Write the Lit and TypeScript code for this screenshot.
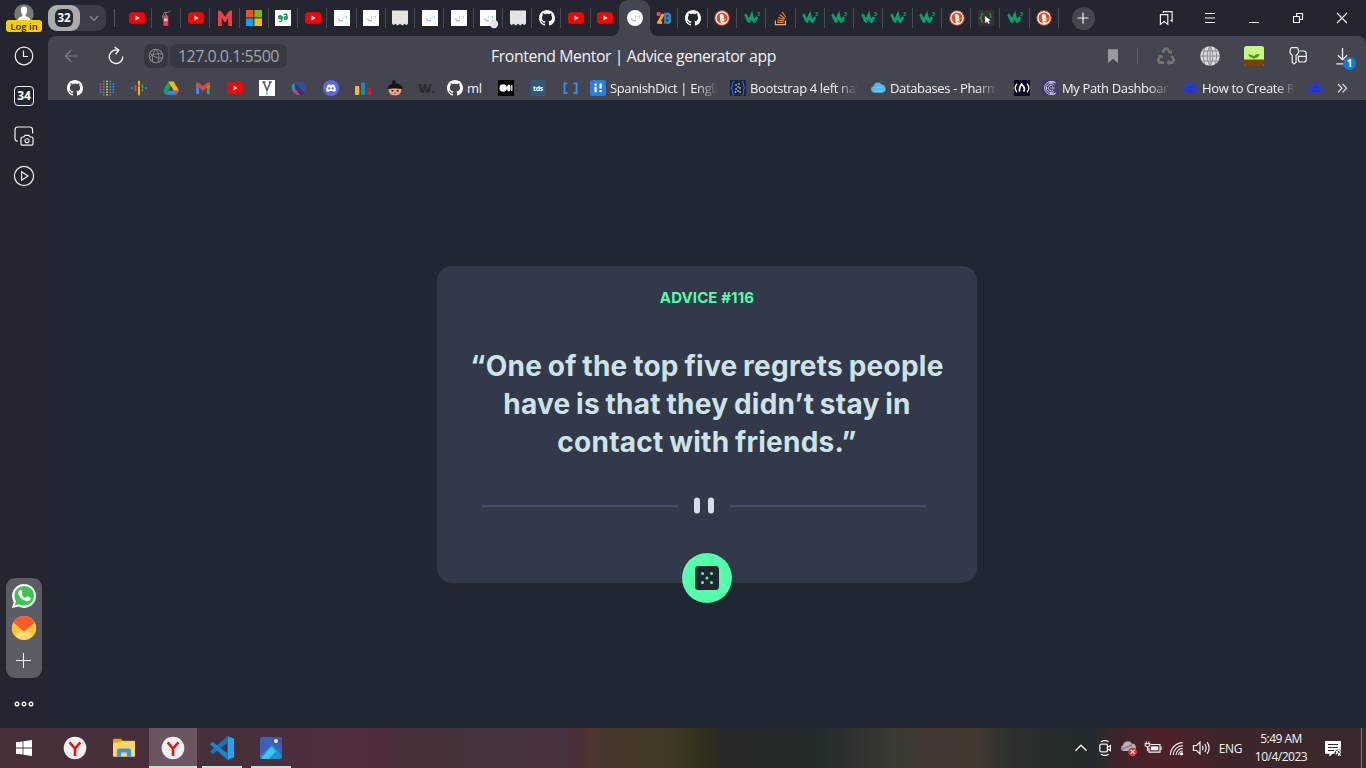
import { LitElement, html, svg, css, nothing } from "lit";
import { customElement, property } from "lit/decorators.js";
import { classMap } from "lit/directives/class-map.js";

const GITHUB =
  "M8 0C3.58 0 0 3.58 0 8c0 3.54 2.29 6.53 5.47 7.59.4.07.55-.17.55-.38 0-.19-.01-.82-.01-1.49-2.01.37-2.53-.49-2.69-.94-.09-.23-.48-.94-.82-1.13-.28-.15-.68-.52-.01-.53.63-.01 1.08.58 1.23.82.72 1.21 1.87.87 2.33.66.07-.52.28-.87.51-1.07-1.78-.2-3.64-.89-3.64-3.95 0-.87.31-1.59.82-2.15-.08-.2-.36-1.02.08-2.12 0 0 .67-.21 2.2.82.64-.18 1.32-.27 2-.27s1.36.09 2 .27c1.53-1.04 2.2-.82 2.2-.82.44 1.1.16 1.92.08 2.12.51.56.82 1.27.82 2.15 0 3.07-1.87 3.75-3.65 3.95.29.25.54.73.54 1.48 0 1.07-.01 1.93-.01 2.2 0 .21.15.46.55.38A8.01 8.01 0 0 0 16 8c0-4.42-3.58-8-8-8z";

const swirl = svg`<path d="M4.200 8.400Q5.400 11.500 9 10.700" stroke="#a7afdc" stroke-width="1.200"/><path d="M8.600 5.200V9" stroke="#b9e3e8" stroke-width=".9"/><path d="M10.300 6.900h.9M12.600 5.700v2.600M11.600 6.900h1" stroke="#8fd3da" stroke-width=".9"/>`;
const cloud = (a: string, b: string) => svg`<path d="M3.800 13.400A3.400 3.400 0 0 1 3 6.800 4.600 4.600 0 0 1 11.300 5a4.400 4.400 0 0 1 1.300 8.400z" transform="translate(.4 -.6)" fill="${a}"/><path d="M5 11.200h7M6.500 7.400h5" stroke="${b}" stroke-width="1"/>`;

/* glyph table: [viewBox size, drawing] */
const glyphs: Record<string, [number, unknown]> = {
  youtube: [16, svg`<rect y="2.3" width="16" height="11.4" rx="3" fill="#f00"/><path d="M6.5 5.6 10.6 8 6.5 10.4z" fill="#fff"/>`],
  extinguisher: [16, svg`<rect x="5.300" y="5" width="5" height="11" rx="1.600" fill="#e2434f"/><path d="M7.800 5V2.500M6 2.400h4.500M10.500 2l2-.8M6 3Q4.600 5 4.600 8.500" stroke="#7d7f87" stroke-width="1"/><rect x="6" y="8.500" width="3.600" height="2.600" fill="#f0b9bd"/>`],
  bigM: [16, svg`<path d="M1 16V1.500Q1 .2 2.200.4 4.600.8 8 7 11.400.8 13.800.4 15 .2 15 1.500V16H11.200V8L8 12.800 4.800 8V16z" fill="#ef3f45"/>`],
  microsoft: [16, svg`<path d="M0 0h7.400v7.400H0z" fill="#f25022"/><path d="M8.400 0H16v7.400H8.400z" fill="#7fba00"/><path d="M0 8.400h7.400V16H0z" fill="#00a4ef"/><path d="M8.400 8.400H16V16H8.400z" fill="#ffb900"/>`],
  ga: [16, svg`<path d="M0 0h16v16H0z" fill="#fff"/><path d="M6.900 6v3.600Q6.900 11.800 4.200 11.600" stroke="#10995b" stroke-width="1.400"/><circle cx="5.200" cy="7.300" r="1.300" stroke="#10995b" stroke-width="1.800"/><path d="M8.600 4.700Q12 3 12 6v3.600" stroke="#10995b" stroke-width="1.500"/><circle cx="10.300" cy="8" r="1.200" stroke="#10995b" stroke-width="1.500"/>`],
  mentor: [16, svg`<path d="M0 0h16v16H0z" fill="#fff"/>${swirl}`],
  mentorDot: [16, svg`<path d="M0 0h16v16H0z" fill="#fff"/>${swirl}<circle cx="14" cy="14" r="4.200" fill="#e4e5ea"/>`],
  mentorRound: [16, svg`<circle cx="8" cy="8" r="8" fill="#fff"/>${swirl}`],
  receipt: [16, svg`<path d="M0 .5h16V13.500l-1.600 1.800-1.800-1.500-2.300 1.700-2.300-1.700-2.300 1.700-2.300-1.700-1.800 1.500L0 13.500z" fill="#e4e4e4"/><path d="M2 3h3M7 6h3M4 9h2M10 3h2" stroke="#dcdcdc"/>`],
  github: [16, svg`<path d="${GITHUB}" fill="#fff"/>`],
  bee: [16, svg`<path d="M2.400 13 7.200 4" stroke="#f9ab17" stroke-width="2.800"/><path d="M1.200 12.600h5" stroke="#f9ab17" stroke-width="2.400"/><circle cx="2.600" cy="4" r="2.200" fill="#ef4b3c"/><path d="M9.400 4v8.600h2.800a2.400 2.400 0 0 0 0-4.600H11h1a2 2 0 0 0 0-4z" stroke="#3c7df0" stroke-width="2.400"/><path d="M12.600 8.400a2.200 2.200 0 0 1-.4 4.200" stroke="#32a852" stroke-width="2.600"/>`],
  duck: [16, svg`<circle cx="8" cy="8" r="7.700" fill="#e0492b"/><circle cx="8" cy="8" r="6.100" stroke="#fff" stroke-width="1.200"/><path d="M5.700 5Q7.600 2.800 9.600 5.300l.4 3 .8 4.600Q9 14.300 6.800 13.200z" fill="#fff"/><path d="M8.400 8h3.600l-1.200 1.400H8.400z" fill="#fbb000"/><path d="m7.600 11.400 3-.6-.2 2.300z" fill="#5bb04a"/>`],
  w3: [16, svg`<path d="M.8 4.600Q2.400 5.200 3.200 8.200 3.900 10.700 5 11.300L7.700 5.300Q8.600 9.800 10.400 11.300L13.200 7" stroke="#0a9f6a" stroke-width="2.900"/><text x="12.900" y="5.600" font-size="5.600" font-weight="700" fill="#0a9f6a">3</text>`],
  stack: [16, svg`<path d="M2.400 10.400v4.200h10V10.400" stroke="#bcbbbb" stroke-width="1.200"/><path d="M4.200 12.400h6.400M4.400 10.100l6.400.6M5.200 7.500l6 1.800M6.800 4.800l5 3.600M9.200 2l3.400 5" stroke="#f48024" stroke-width="1.200"/>`],
  codeCursor: [16, svg`<rect width="16" height="16" rx="2" fill="#33332f"/><path d="M5 3.600Q3.400 3.400 3.600 5.400T2.200 8q1.600.3 1.400 2.400T5 12.200M11 3.600q1.600-.2 1.400 1.800T13.800 8" stroke="#2f9c52" stroke-width="1.200"/><path d="m6.800 6 .4 7.200 1.700-1.700 1.600 2.400 1.300-.8-1.500-2.400 2.300-.4z" fill="#fff"/>`],
  dots: [16, svg`${[1.6, 4.8, 8, 11.2, 14.4].map((x, i) => [0, 1, 2, 3, 4, 5].map((y) => (i % 4 === 0 && (y === 0 || y === 5)) ? nothing : svg`<circle cx="${x}" cy="${1.4 + y * 2.7}" r=".95" fill="${y < 3 ? ["#ea4335", "#4285f4", "#fbbc04", "#4285f4", "#4285f4"][i] : ["#4285f4", "#34a853", "#fbbc04", "#4285f4", "#34a853"][i]}"/>`))}`],
  podcasts: [16, svg`<g stroke-width="1.900" stroke-linecap="round"><path d="M1.200 8v.2" stroke="#3c82f0"/><path d="M4.600 6v4.600" stroke="#ea4335"/><path d="M8 1.400v3.400" stroke="#fbbc04"/><path d="M8 7v7.600" stroke="#fbbc04"/><path d="M11.400 5.200v2.400M11.400 10v.6" stroke="#34a853"/><path d="M14.800 8v.2" stroke="#4285f4"/></g>`],
  drive: [16, svg`<path d="M5.400 1.500 0 10.800l2.700 4L8 5.700z" fill="#10a65a"/><path d="M5.400 1.500h5.200L16 10.800h-5.200z" fill="#ffba00"/><path d="M5.300 10.800H16l-2.700 4H2.700z" fill="#3f7df0"/><path d="M13 10.800h3l-2.700 4z" fill="#ea4335"/>`],
  gmail: [16, svg`<path d="M1.200 3.600h2.900V14H2.200a1 1 0 0 1-1-1z" fill="#4285f4"/><path d="M11.900 3.600h2.900V13a1 1 0 0 1-1 1h-1.900z" fill="#34a853"/><path d="m11.900 3.200 2.900-.3v3.400l-2.900 2.300z" fill="#fbbc04"/><path d="M1.200 3q1.500-1 2.900 0L8 6.200 11.900 3q1.600-1 2.900 0v2.400L8 10.800 1.200 5.400z" fill="#ea4335"/>`],
  vee: [16, svg`<path d="M0 0h16v16H0z" fill="#fff"/><path d="M4.600 2 8 10.300 11.400 2M3.400 2h3M9.800 2h3" stroke="#555" stroke-width="1.500"/><path d="M8 11v4" stroke="#7cc5e8" stroke-width="1.600"/>`],
  sphere: [16, svg`<circle cx="8" cy="8" r="7.400" fill="#3a3278"/><path d="M3.400 2.200A7.400 7.400 0 0 0 2.400 12.800L4 9z" fill="#1f9da8"/><path d="M3.400 2.200 13.600 12.800A7.400 7.400 0 0 0 11 1.300Q7 0 3.400 2.200z" fill="#34508f"/><path d="m3.600 8 5.600 7.300Q5 15.600 2.400 12.800z" fill="#b8477d"/>`],
  discord: [16, svg`<circle cx="8" cy="8" r="8" fill="#5865f2"/><path d="M3.200 11Q3 7.400 4.800 4.800l2-.6.5.7h1.400l.5-.7 2 .6Q13 7.400 12.800 11l-2.100 1.100-.7-1.200H6l-.7 1.200z" fill="#fff"/><circle cx="6.300" cy="8.400" r="1.100" fill="#5865f2"/><circle cx="9.700" cy="8.400" r="1.100" fill="#5865f2"/>`],
  bars: [16, svg`<rect x="0" y="6" width="4.300" height="9" rx="1" fill="#f2b934"/><rect x="6" y="2.400" width="4.300" height="12.600" rx="1" fill="#1d87bd"/><rect x="12" y="7.600" width="4.200" height="7.400" rx="1" fill="#bf2432"/>`],
  head: [16, svg`<circle cx="7" cy="2" r="1.800" fill="#111"/><path d="M.4 9Q1 3.400 8 3.400T15.600 9z" fill="#16120f"/><path d="M1.600 8.600h12.800q.6 6.600-6.400 7Q1 15.200 1.600 8.600z" fill="#eaa387"/><path d="M1 8.800Q5 9 7 6.400 10 9 15 8.800V6H1z" fill="#16120f"/><circle cx="5.400" cy="10.800" r="1" fill="#34201c"/><circle cx="10.600" cy="10.800" r="1" fill="#34201c"/><path d="M6.800 13.400h2.400" stroke="#c84d4d"/>`],
  wDot: [16, svg`<text x="-.8" y="12.600" font-size="13" font-weight="800" fill="#2b2b30">W.</text>`],
  medium: [16, svg`<path d="M0 0h16v16H0z" fill="#000"/><circle cx="5.200" cy="8" r="3.800" fill="#fff"/><ellipse cx="10.800" cy="8" rx="1.700" ry="3.500" fill="#fff"/><path d="M13.800 5v6" stroke="#fff" stroke-width="1.200"/>`],
  tds: [16, svg`<path d="M0 0h16v16H0z" fill="#355876"/><text x="8" y="10.800" font-size="7" font-weight="700" text-anchor="middle" fill="#fff">tds</text>`],
  brackets: [16, svg`<path d="M5.400 3.400H2.400v9.600h3M11.600 3.400h3v9.600h-3" stroke="#3b8fe8" stroke-width="1.800"/>`],
  spanish: [16, svg`<rect width="16" height="16" rx="2.600" fill="#2680e0"/><path d="M5.600 6.800v5.400M10.600 3.400v5.200" stroke="#fff" stroke-width="2.300"/><path d="M5.600 3.400v2.200M10.600 10v2.200" stroke="#fff" stroke-width="2.300"/>`],
  snippet: [16, svg`<path d="M0 0h16v16H0z" fill="#1c2533"/><path d="M4.400 1.400Q2.400 1.400 2.600 4T1 8q1.800.6 1.600 4t1.800 2.600M11.600 1.400q2 0 1.800 2.600T15 8q-1.800.6-1.600 4t-1.800 2.600" stroke="#2857e4" stroke-width="1.300"/><path d="M6 5h.1M9 4h.1M8 7h.1M10 8h.1M6 9h.1M8 11h.1M10 12h.1M5.500 12h.1" stroke="#dfe6f4" stroke-width="1.600" stroke-linecap="round"/>`],
  cloudLight: [16, cloud("#56b7ea", "#8fd2f4")],
  cloudBlue: [16, cloud("#2c37cc", "#2630b4")],
  fcc: [16, svg`<path d="M0 0h16v16H0z" fill="#0a0a23"/><path d="M3 3.600Q-.6 8 3 12.400M13 3.600q3.600 4.400 0 8.800" stroke="#fff" stroke-width="1.300"/><path d="M5.800 11.600Q4.400 9 7.600 4q3 3 2.800 5.400l-.6 2.200" stroke="#fff" stroke-width="1.700"/>`],
  coil: [16, svg`<path d="M0 0h16v16H0z" fill="#44386e"/><path d="M13.800 3.200a6.600 6.600 0 1 0 0 9.600M12.400 5a4.600 4.600 0 1 0 0 6M11.200 6.600a2.700 2.700 0 1 0 0 3M7 2.200h6M8 13.800h5.600M8 8h4.800" stroke="#cfc9e6" stroke-width="1"/>`],

  chevDown: [16, svg`<path d="m4 6 4 4.400L12 6" stroke="#8f9097" stroke-width="1.200"/>`],
  plus: [16, svg`<path d="M8 2.600v10.800M2.600 8h10.800" stroke="#f2f2f4" stroke-width="1.200"/>`],
  plusLight: [15, svg`<path d="M7.500 0v15M0 7.500h15" stroke="#f0f0f2" stroke-width="1"/>`],
  collections: [16, svg`<path d="M5.300 3V1.600h8.800v9.800l-1.700-1.300" stroke="#f0f0f2" stroke-width="1.200"/><path d="M2.400 4.600h7.400v9.800L6.100 11.600l-3.700 2.800z" stroke="#f0f0f2" stroke-width="1.200"/>`],
  menu: [16, svg`<path d="M3 3.500h10M3 8h10M3 12.500h10" stroke="#f5f5f6" stroke-width="1.100"/>`],
  minimize: [16, svg`<path d="M3 12.500h10" stroke="#f5f5f6"/>`],
  restore: [16, svg`<path d="M3.500 6.500h6v6h-6zM6.600 6.400V3.500h5.900v6H9.800" stroke="#f5f5f6" stroke-width="1.100"/>`],
  close: [16, svg`<path d="m3 3 10 10M13 3 3 13" stroke="#f5f5f6" stroke-width="1.100"/>`],
  back: [16, svg`<path d="M15 8H1.600M7.400 2 1.400 8l6 6" stroke="#7d7d86" stroke-width="1.200"/>`],
  reload: [20, svg`<path d="M16.800 10.600A6.800 6.800 0 1 1 12.400 4.400" stroke="#efeff1" stroke-width="1.400"/><path d="m8.600 1 4.200 3.200-3.200 4" stroke="#efeff1" stroke-width="1.400"/>`],
  globeThin: [16, svg`<circle cx="8" cy="8" r="6.800" stroke="#85868e" stroke-width="1.100"/><path d="M1.300 9.200Q8 4 14.400 6.200M4.600 13.600Q3.600 6 7.600 1.400M10 14.400Q12.600 7.200 8 1.400M1.900 5.200q5 5.400 12.400 5" stroke="#85868e" stroke-width="1"/>`],
  bookmark: [16, svg`<path d="M3 1.200h10V15L8 10.800 3 15z" fill="#9a9aa1"/>`],
  recycle: [20, svg`<g stroke="#74746f" stroke-width="2.600"><path d="M6.500 6.500 9 2.800h2.600l2.200 3.600"/><path d="m15.600 9.600 2.200 4.200-1.400 2.800h-4.200"/><path d="M8 16.600H3.400L2.200 14l2.200-3.800"/></g><path d="m11.800 6.400 4 1.600.4-4zM13.400 13.400v6l-3-3zM1.600 9.600l4.400-.8 1.400 4z" fill="#74746f"/>`],
  globe: [20, svg`<circle cx="10" cy="10" r="9.800" fill="#d9d9da"/><path d="M10 0v20M2.400 5h15.200M0 10h20M2.400 15h15.200M4.600 2Q1.800 10 4.600 18M15.400 2q2.800 8 0 16M10 .2Q4 10 10 19.800M10 .2q6 9.800 0 19.600" stroke="#86868b" stroke-width=".9"/>`],
  plant: [20, svg`<rect width="20" height="20" rx="2.600" fill="#c9f583"/><path d="M0 13.400h20v4a2.600 2.600 0 0 1-2.600 2.600H2.600A2.600 2.600 0 0 1 0 17.400z" fill="#7b3f08"/><path d="M10 13.600v-3.200M10 11.400Q6.600 12 5 9q3-.4 5 2.400 1.400-2.800 4.800-2.800-1 3-4.800 2.800" fill="#459a10" stroke="#459a10" stroke-width="1.100"/>`],
  keys: [20, svg`<path d="M4.200 9.200Q1.600 7.600 2 4.800L2.600 2.600Q2.900 1.700 4 1.700H8.600q1.100 0 1.400.9l.6 2.200q.4 2.800-2.500 4.400v7l-2 1.700-1.900-1.700z" stroke="#f0f0f2" stroke-width="1.200"/><path d="M11.400 5h4.200q2.600 0 2.600 2.600v5.800q0 2.600-2.600 2.600h-3q-2.200 0-2.200-2.200V9.600M10.600 10.300h7.400" stroke="#f0f0f2" stroke-width="1.200"/>`],
  download: [20, svg`<path d="M10.500 2v11.400M5.900 9.200l4.600 4.500 4.600-4.500M4.300 17.800h9" stroke="#f0f0f2" stroke-width="1.300"/>`],
  more: [16, svg`<path d="m4 4 4 4.200L4 12.400M8.600 4l4 4.200-4 4.200" stroke="#e6e6ea" stroke-width="1.200"/>`],

  avatar: [20, svg`<circle cx="10" cy="10" r="9.800" fill="#77787c"/><path d="M10 2.400q3.400 0 3.200 3.600-.2 3.400-1.600 4.800v1.400q4 1 4.600 3.400v2.600L10 20l-6.200-1.800v-2.600q.6-2.400 4.600-3.400v-1.400Q7 9.400 6.800 6 6.600 2.400 10 2.400z" fill="#fff"/>`],
  clock: [20, svg`<circle cx="10" cy="10" r="8.800" stroke="#f0f0f2" stroke-width="1.200"/><path d="M9.500 4.500V10.500H14" stroke="#f0f0f2" stroke-width="1.200"/>`],
  camera: [22, svg`<path d="M4.600 16.400Q2 16 2 13.600V5q0-3 3-3h11.600q3 0 3 3v3.600" stroke="#f0f0f2" stroke-width="1.200"/><path d="M8 13.400q0-1.400 1.400-1.400h1.400l1.200-1.600h4l1.200 1.600h1.400q1.400 0 1.400 1.400v5.200q0 1.600-1.400 1.600H9.400Q8 20.200 8 18.600z" stroke="#f0f0f2" stroke-width="1.200"/><circle cx="14" cy="15.800" r="2" stroke="#f0f0f2" stroke-width="1.100"/>`],
  play: [22, svg`<circle cx="11" cy="11" r="9.600" stroke="#f0f0f2" stroke-width="1.200"/><path d="M8.600 6.800 15 11l-6.400 4.200z" stroke="#f0f0f2" stroke-width="1.200"/>`],
  whatsapp: [24, svg`<path d="M0 24 1.700 18A12 12 0 1 1 6.400 22.500z" fill="#fff"/><circle cx="12.200" cy="11.800" r="9.900" fill="#3fc351"/><path d="m2.600 21.600 1.500-5.200 3.600 3.800z" fill="#3fc351"/><path d="M7.800 5.900q1-.6 1.700.4l1 2.300q.2.700-.9 1.900 1.500 2.600 4 3.600l1.400-1.500q.4-.4 1-.1l2.300 1.200q.6.400.1 1.700-1.100 2.100-3.800 1.700-6-1.600-8.300-7.200-.5-2.600 1.500-4z" fill="#fff"/>`],
  mail: [24, svg`<circle cx="12" cy="12" r="12" fill="#ffda77"/><path d="M1.400 6.400 10 13.600 3 20A12 12 0 0 1 1.400 6.400zM22.600 6.400 14 13.600l7 6.400a12 12 0 0 0 1.600-13.600z" fill="#ffc530"/><path d="M1.400 6.500Q4.600 0 12 0t10.600 6.500L12 15.600z" fill="#fa5a2c"/>`],
  ellipsis: [22, svg`<g stroke="#f0f0f2" stroke-width="1.400"><circle cx="4" cy="11" r="1.800"/><circle cx="11" cy="11" r="1.800"/><circle cx="18" cy="11" r="1.800"/></g>`],

  windows: [16, svg`<path d="M0 2.300 6.600 1.400v6.100H0zM7.400 1.300 16 0v7.500H7.400zM0 8.400h6.600v6.200L0 13.700zM7.400 8.400H16V16l-8.600-1.300z" fill="#fff"/>`],
  yandex: [22, svg`<circle cx="11" cy="11" r="11.300" fill="#f1f1f1"/><path d="M5.600 5.400 11 11.600l5.400-6.200M11 11v8" stroke="#e0161c" stroke-width="2.600"/>`],
  folder: [22, svg`<path d="M0 3q0-1.200 1.200-1.200h6.600l1.800 2H22V9H0z" fill="#e5a50d"/><path d="M0 6.400 9.600 4.200H22V19q0 .8-.8.8H.8Q0 19.800 0 19z" fill="#ffd766"/><path d="M4 19.800v-6.400q0-2 2-2h10q2 0 2 2v6.400h-4.200V15.600H8.200v4.200z" fill="#3a95dd"/>`],
  vscode: [24, svg`<path d="M17.600 0 24 2.800v18.400L17.600 24z" fill="#25a3f1"/><path d="M0 15.600 17.600 0v6.800L2.400 18.400z" fill="#0f74b8"/><path d="M0 8.200 2.400 5.800 17.600 17.200V24z" fill="#1485cf"/>`],
  photos: [22, svg`<rect width="22" height="22" rx="2.400" fill="#3c60ba"/><path d="M12 0h7.600Q22 0 22 2.400V10z" fill="#51509f"/><path d="M0 20 9.400 9.400q2-2 4 0L22 18v1.600Q22 22 19.600 22H2.400Q0 22 0 20z" fill="#1c8dd8"/><path d="M1 21.400 10.400 10.600q1-1 2 0L16 14.600 8.600 22H2.400z" fill="#3cc6ee"/><circle cx="16" cy="4" r="1.900" fill="#f5f7fc"/>`],
  chevUp: [16, svg`<path d="m2.400 10.800 5.600-5.600 5.600 5.600" stroke="#f3f3f3" stroke-width="1.300"/>`],
  meet: [16, svg`<rect x="2.800" y="4.200" width="7.600" height="7.600" rx="1.600" stroke="#f3f3f3" stroke-width="1.300"/><path d="m10.600 7.200 2.800-1.600v5l-2.800-1.600M4 1.800Q8 -.4 11.600 1.800M4 14.200q4 2.200 7.600 0" stroke="#f3f3f3" stroke-width="1.200"/>`],
  drop: [18, svg`<path d="M3 12A3 3 0 0 1 3 6.400 4.800 4.800 0 0 1 11.800 4.600 4 4 0 0 1 14 12z" fill="#b7b3b4"/><path d="M1.600 10.200 12.400 5.800" stroke="#8c8788" stroke-width="1.800"/><circle cx="12.600" cy="12.800" r="4.400" fill="#e2323e"/><path d="m10.700 10.900 3.800 3.800M14.500 10.900l-3.800 3.800" stroke="#fff" stroke-width="1.200"/>`],
  battery: [18, svg`<path d="M6.600 5.500h9.400v7.600H5V9" stroke="#f3f3f3" stroke-width="1.200"/><path d="M6.800 7.300h7.500v4H6.800z" fill="#f3f3f3"/><path d="M17.100 7.600v3.400M2.200 2.600v2M4.800 2.600v2M1.200 4.600h4.600v1.800L4.700 7.800H2.300L1.200 6.400zM3.500 8v4" stroke="#f3f3f3" stroke-width="1.100"/>`],
  wifi: [16, svg`<path d="M2.400 15A12.600 12.600 0 0 1 14.800 2.600M5.200 15A9.600 9.600 0 0 1 14.800 5.600M8 15a6.800 6.800 0 0 1 6.800-6.600M10.600 15A4.200 4.200 0 0 1 14.800 11" stroke="#e8e8e8" stroke-width="1.200" transform="translate(-1)"/><circle cx="12.600" cy="13.800" r="1.600" fill="#fff"/>`],
  volume: [18, svg`<path d="M1.400 6.600h2.800L8 3.200v11.600l-3.800-3.400H1.400z" stroke="#f3f3f3" stroke-width="1.200"/><path d="M10.400 6.800q1.400 2.200 0 4.400M12.800 5q2.600 4 0 8M15.200 3.200q3.800 5.800 0 11.600" stroke="#f3f3f3" stroke-width="1.200"/>`],
  notice: [18, svg`<path d="M1 2h16v12.800H8.400L5.400 17.800V14.800H1z" fill="#fff"/><path d="M4 5.500h10M4 8.500h10M4 11.500h6" stroke="#3a292c" stroke-width="1.100"/><circle cx="14.200" cy="14" r="3.600" fill="#3a292c"/><path d="M11.800 15.400q1-.6 1-2.200 1.200-2.600 3-1.400 1.200 1.400-.2 3l-1.600 1.800M11.400 11.600l5.400 5" stroke="#fff" stroke-width="1.100"/>`],
};

@customElement("ui-glyph")
class UiGlyph extends LitElement {
  @property() name = "";
  @property({ type: Number }) size = 16;
  static styles = css`
    :host { display: block; flex: none; line-height: 0; }
    svg { display: block; overflow: visible; fill: none; font-family: "Open Sans", sans-serif; }
  `;
  render() {
    const [box, art] = glyphs[this.name];
    return html`<svg width=${this.size} height=${this.size} viewBox="0 0 ${box} ${box}">${art}</svg>`;
  }
}

const g = (name: string, size = 16) => html`<ui-glyph name=${name} size=${size}></ui-glyph>`;

const TABS = [
  "youtube", "extinguisher", "youtube", "bigM", "microsoft", "ga", "youtube", "mentor", "mentor", "receipt",
  "mentor", "mentor", "mentorDot", "receipt", "github", "youtube", "youtube", "mentorRound", "bee", "github",
  "duck", "w3", "stack", "w3", "w3", "w3", "w3", "w3", "duck", "codeCursor", "w3", "duck",
];
const ACTIVE = 17;

const BOOKMARKS: { icon: string; text?: string; kind?: string }[] = [
  { icon: "github" }, { icon: "dots" }, { icon: "podcasts" }, { icon: "drive" }, { icon: "gmail" },
  { icon: "youtube" }, { icon: "vee" }, { icon: "sphere" }, { icon: "discord" }, { icon: "bars" },
  { icon: "head" }, { icon: "wDot", kind: "tight" }, { icon: "github", text: "ml", kind: "short" }, { icon: "medium" },
  { icon: "tds" }, { icon: "brackets", kind: "tight" },
  { icon: "spanish", text: "SpanishDict | Englis", kind: "long" },
  { icon: "snippet", text: "Bootstrap 4 left nav", kind: "long" },
  { icon: "cloudLight", text: "Databases - Pharm", kind: "long shifted" },
  { icon: "fcc", kind: "tight" },
  { icon: "coil", text: "My Path Dashboar", kind: "long" },
  { icon: "cloudBlue", text: "How to Create R", kind: "mid" },
  { icon: "cloudBlue" },
];

@customElement("browser-chrome")
class BrowserChrome extends LitElement {
  static styles = css`
    :host { display: block; font-family: "Open Sans", sans-serif; color: #f2f2f5; }
    .tabs { display: flex; align-items: center; height: 36px; }
    .group { display: flex; width: 58px; height: 26px; border-radius: 9px; background: #3c3e47; }
    .count { width: 32px; height: 26px; border-radius: 9px; background: #aaabaf; display: grid; place-items: center; }
    .count b { width: 18px; height: 18px; border-radius: 6px; background: #24262f; color: #fff; font-size: 11.500px; line-height: 18px; text-align: center; }
    .chev { flex: 1; display: grid; place-items: center; padding-left: 1px; }
    .bar { width: 1px; height: 18px; background: #54565e; margin: 0 7.450px 0 8px; }
    .strip { display: grid; grid-template-columns: repeat(32, 29.270px); height: 36px; }
    .tab { display: flex; align-items: center; justify-content: center; background: linear-gradient(#484a53, #484a53) right center / 1px 20px no-repeat; }
    .tab.plain { background: none; }
    .tab.active { position: relative; background: #45454f; border-radius: 9px 9px 0 0; margin: 0 -.8px; }
    .tab.active::before, .tab.active::after { content: ""; position: absolute; bottom: 0; width: 7px; height: 7px; }
    .tab.active::before { right: 100%; background: radial-gradient(circle at 0 0, transparent 6.500px, #45454f 7px); }
    .tab.active::after { left: 100%; background: radial-gradient(circle at 100% 0, transparent 6.500px, #45454f 7px); }
    .add { width: 23px; height: 23px; border-radius: 50%; background: #45464f; display: grid; place-items: center; margin-left: 13px; }
    .system { margin-left: auto; display: grid; grid-template-columns: repeat(5, 44px); justify-items: center; padding-right: 2px; }
    .tools { display: flex; align-items: center; height: 40px; background: #45454f; border-radius: 8px 8px 0 0; }
    .cell { width: 44px; display: grid; place-items: center; }
    .cell.first { margin-left: 2px; }
    .site { width: 24px; height: 24px; border-radius: 7px; background: #373942; display: grid; place-items: center; margin: 0 2px 0 6px; }
    .url { width: 117px; height: 24px; border-radius: 7px; background: #373942; color: #a3a4aa; text-align: center; font-size: 16px; line-height: 25px; letter-spacing: -.52px; }
    .title { width: 693px; text-align: center; font-size: 15.800px; line-height: 41px; letter-spacing: -.4px; }
    .right { display: flex; align-items: center; margin-left: auto; padding-right: 2px; }
    .rule { width: 1px; height: 16px; background: #62626b; margin: 0 6px 0 16px; }
    .dl { position: relative; }
    .badge { position: absolute; right: 8px; top: 11px; width: 13px; height: 13px; border-radius: 50%; background: #0a7be0; color: #fff; font-size: 10px; line-height: 13px; font-weight: 700; text-align: center; }
    .marks { display: flex; align-items: center; height: 24px; background: #45454f; padding: 0 16px 0 11px; }
    .mark { display: flex; align-items: center; gap: 4px; padding-left: 8px; width: 24px; flex: none; white-space: nowrap; font-size: 13px; line-height: 24px; letter-spacing: -.36px; }
    .mark.tight { width: 20px; }
    .mark.short { width: 43px; }
    .mark.long { width: 132px; }
    .mark.shifted { width: 136px; }
    .mark.mid { width: 117px; }
    .label { width: 108px; flex: none; }
    .short .label { width: 18px; }
    .mid .label { width: 93px; }
    .long .label, .mid .label { -webkit-mask-image: linear-gradient(90deg, #000 80%, transparent); mask-image: linear-gradient(90deg, #000 80%, transparent); }
    .end { margin-left: auto; }
  `;
  render() {
    return html`
      <div class="tabs">
        <div class="group">
          <div class="count"><b>32</b></div>
          <div class="chev">${g("chevDown")}</div>
        </div>
        <div class="bar"></div>
        <div class="strip">
          ${TABS.map((t, i) => html`<div class=${classMap({ tab: true, active: i === ACTIVE, plain: i === ACTIVE - 1 })}>${g(t)}</div>`)}
        </div>
        <div class="add">${g("plus")}</div>
        <div class="system">${["collections", "menu", "minimize", "restore", "close"].map((n) => g(n))}</div>
      </div>
      <div class="tools">
        <div class="cell first">${g("back")}</div>
        <div class="cell">${g("reload", 20)}</div>
        <div class="site">${g("globeThin")}</div>
        <div class="url">127.0.0.1:5500</div>
        <div class="title">Frontend Mentor | Advice generator app</div>
        <div class="right">
          ${g("bookmark")}
          <div class="rule"></div>
          ${["recycle", "globe", "plant", "keys"].map((n) => html`<div class="cell">${g(n, 20)}</div>`)}
          <div class="cell dl">${g("download", 20)}<span class="badge">1</span></div>
        </div>
      </div>
      <div class="marks">
        ${BOOKMARKS.map((b) => html`<div class="mark ${b.kind ?? ""}">${g(b.icon)}${b.text ? html`<span class="label">${b.text}</span>` : nothing}</div>`)}
        <div class="end">${g("more")}</div>
      </div>
    `;
  }
}

@customElement("side-rail")
class SideRail extends LitElement {
  static styles = css`
    :host { display: flex; flex-direction: column; align-items: center; width: 48px; flex: none; font-family: "Open Sans", sans-serif; }
    .user { padding-top: 4px; height: 28px; display: flex; flex-direction: column; align-items: center; }
    .login { margin-top: -4px; width: 36px; height: 12px; border-radius: 3px; background: #ffcc00; color: #1c1c1c; font-size: 9.500px; line-height: 13px; font-weight: 600; text-align: center; position: relative; }
    .nav { display: grid; grid-auto-rows: 40px; place-items: center; margin-top: 4px; }
    .day { box-sizing: border-box; width: 20px; height: 20px; border: 1px solid #f0f0f2; border-radius: 4px; color: #fff; font-size: 12px; line-height: 18px; font-weight: 700; text-align: center; }
    .dock { margin-top: auto; width: 36px; height: 100px; border-radius: 9px; background: #5b5c64; display: grid; grid-auto-rows: 32px; align-content: center; place-items: center; }
    .dock ui-glyph:last-child { margin-right: 1px; }
    .more { margin: 15px 0 13px; }
  `;
  render() {
    return html`
      <div class="user">${g("avatar", 20)}<div class="login">Log in</div></div>
      <div class="nav">${g("clock", 20)}<div class="day">34</div>${g("camera", 22)}${g("play", 22)}</div>
      <div class="dock">${g("whatsapp", 24)}${g("mail", 24)}${g("plusLight", 15)}</div>
      <div class="more">${g("ellipsis", 22)}</div>
    `;
  }
}

@customElement("advice-card")
class AdviceCard extends LitElement {
  static styles = css`
    :host { display: flex; flex-direction: column; align-items: center; box-sizing: border-box; width: 540px; height: 317.400px; padding-top: 22px; border-radius: 15px; background: #323a49; font-family: Inter, sans-serif; text-align: center; }
    .label { color: #53ffaa; font-size: 15px; line-height: 20px; font-weight: 700; letter-spacing: .12px; }
    .quote { margin-top: 39px; color: #cee3e9; font-size: 28px; line-height: 38px; font-weight: 700; letter-spacing: .25px; word-spacing: -1.200px; white-space: nowrap; }
    .divider { display: block; flex: none; margin: 36px 6px 0 0; }
    .dice { margin-top: 39.400px; width: 50px; height: 50px; flex: none; border-radius: 50%; background: #53ffaa; display: grid; place-items: center; }
  `;
  render() {
    return html`
      <div class="label">ADVICE #116</div>
      <div class="quote">“One of the top five regrets people<br />have is that they didn’t stay in<br />contact with friends.”</div>
      <svg class="divider" width="444" height="17" viewBox="0 0 444 17">
        <path d="M0 9h196M248 9h196" stroke="#465267" stroke-width="1.800" />
        <rect x="212" y=".5" width="6" height="16" rx="3" fill="#cee3e9" />
        <rect x="226" y=".5" width="6" height="16" rx="3" fill="#cee3e9" />
      </svg>
      <div class="dice">
        <svg width="24" height="24" viewBox="0 0 24 24">
          <rect width="24" height="24" rx="3.500" fill="#202733" />
          <g fill="#53ffaa"><circle cx="7.500" cy="7.500" r="1.500" /><circle cx="16.500" cy="7.500" r="1.500" /><circle cx="12" cy="12" r="1.500" /><circle cx="7.500" cy="16.500" r="1.500" /><circle cx="16.500" cy="16.500" r="1.500" /></g>
        </svg>
      </div>
    `;
  }
}

@customElement("task-bar")
class TaskBar extends LitElement {
  static styles = css`
    :host { display: flex; height: 40px; flex: none; color: #f5f5f5; font-family: "Open Sans", sans-serif; font-size: 12px;
      background: linear-gradient(90deg, #472f3c 0, #462f3b 250px, #522e3f 345px, #4f2d3d 385px, #442f3a 405px, #45343f 490px, #47323f 560px, #4b3036 582px, #53352d 590px, #45392c 605px, #433a2a 660px, #37351f 690px, #2b2b20 715px, #262a28 725px, #242b2c 820px, #3a3a30 895px, #443a32 925px, #43392f 975px, #31332c 1000px, #2c302c 1016px, #242b2c 1070px, #242a2b 1095px, #3a2529 1112px, #4a2228 1150px, #4b2228 1175px, #3d2529 1225px, #38292b 1366px); }
    .app { width: 48px; display: flex; align-items: center; justify-content: center; margin-right: 1px; }
    .start { margin-right: 3px; }
    .open { width: 40px; margin: 0 4px 0 5px; box-shadow: inset 0 -2px #a5f3d2; }
    .front { margin-right: 0; background: #6b565f; box-shadow: inset 0 -2px #a5f3d2; }
    .tray { margin-left: auto; display: flex; align-items: center; }
    .slot { width: 24px; display: grid; place-items: center; }
    .lang { width: 35px; text-align: center; letter-spacing: -.3px; }
    .clock { width: 66px; text-align: center; line-height: 18px; letter-spacing: -.5px; }
    .notice { width: 38px; padding-right: 9px; display: grid; place-items: center; }
    .peek { width: 1px; height: 40px; background: #83777a; margin-right: 4px; }
  `;
  render() {
    return html`
      <div class="app start">${g("windows", 16)}</div>
      <div class="app">${g("yandex", 22)}</div>
      <div class="app">${g("folder", 22)}</div>
      <div class="app front">${g("yandex", 22)}</div>
      <div class="app open">${g("vscode", 24)}</div>
      <div class="app open">${g("photos", 22)}</div>
      <div class="tray">
        ${["chevUp", "meet", "drop", "battery", "wifi", "volume"].map((n) => html`<div class="slot">${g(n, glyphs[n][0])}</div>`)}
        <div class="lang">ENG</div>
        <div class="clock">5:49 AM<br />10/4/2023</div>
        <div class="notice">${g("notice", 18)}</div>
        <div class="peek"></div>
      </div>
    `;
  }
}

@customElement("app-root")
class AppRoot extends LitElement {
  static styles = css`
    :host { display: flex; flex-direction: column; width: 1366px; height: 768px; overflow: hidden; background: #24262f; }
    .window { display: flex; flex: 1; min-height: 0; }
    .main { flex: 1; min-width: 0; display: flex; flex-direction: column; }
    .page { flex: 1; background: #202632; display: flex; justify-content: center; align-items: flex-start; padding-top: 166px; }
  `;
  render() {
    return html`
      <div class="window">
        <side-rail></side-rail>
        <div class="main">
          <browser-chrome></browser-chrome>
          <div class="page"><advice-card></advice-card></div>
        </div>
      </div>
      <task-bar></task-bar>
    `;
  }
}
